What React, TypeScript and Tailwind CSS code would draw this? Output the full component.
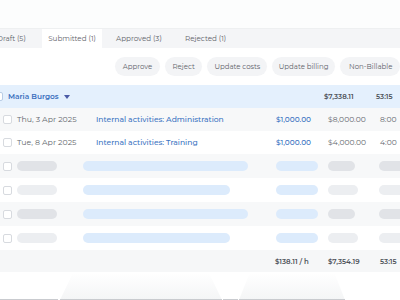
import React from "react";

const font = { fontFamily: "Montserrat, 'Noto Sans', Inter, sans-serif" };

function Box({ cls = "" }: { cls?: string }) {
  return <div className={`w-[9px] h-[9px] rounded-[2px] border border-[#d7dadf] bg-white shrink-0 ${cls}`} />;
}

function DataRow({ bg, date, desc, rate, cost, hours }: { bg: string; date: string; desc: string; rate: string; cost: string; hours: string }) {
  return (
    <div className={`flex items-center h-[23px] ${bg}`}>
      <div className="w-[17px] pl-[3px] shrink-0"><Box /></div>
      <div className="w-[79px] shrink-0 text-[#63676d] text-[7.8px]">{date}</div>
      <div className="w-[180px] shrink-0 text-[#3b74c2] font-medium whitespace-nowrap text-[7.6px]">{desc}</div>
      <div className="w-[52px] shrink-0 text-[#3b74c2] font-medium text-[7.4px]">{rate}</div>
      <div className="w-[52px] shrink-0 text-[#63676d] text-[7.6px]">{cost}</div>
      <div className="shrink-0 text-[#63676d] text-[7.6px]">{hours}</div>
    </div>
  );
}

function SkelRow({ bg, dark, blueW, grayW }: { bg: string; dark: boolean; blueW: string; grayW: string }) {
  const g = dark ? "bg-[#e1e3e7]" : "bg-[#eceef1]";
  return (
    <div className={`flex items-center h-[24px] ${bg}`}>
      <div className="w-[17px] pl-[3px] shrink-0"><Box /></div>
      <div className="w-[66px] shrink-0"><div className={`w-[40px] h-[10px] rounded-full ${g}`} /></div>
      <div className="w-[193px] shrink-0"><div className={`${blueW} h-[10px] rounded-full bg-[#dcebfc]`} /></div>
      <div className="w-[52px] shrink-0"><div className="w-[42px] h-[10px] rounded-full bg-[#dcebfc]" /></div>
      <div className="w-[51px] shrink-0"><div className={`${grayW} h-[10px] rounded-full ${g}`} /></div>
      <div className="shrink-0"><div className={`w-[30px] h-[10px] rounded-full ${g}`} /></div>
    </div>
  );
}

export default function App() {
  return (
    <div className="w-[400px] h-[300px] overflow-hidden bg-white relative text-[7px] leading-none" style={font}>
      <div className="h-[29px] bg-[#fcfdfd] border-b border-[#eef0f1]" />
      <div className="flex items-stretch h-[19px] bg-[#f4f5f7] text-[#5f636a] text-[7.2px]">
        <div className="flex items-center -ml-[3px] w-[45px]">Draft (5)</div>
        <div className="flex items-center justify-center w-[60px] bg-white">Submitted (1)</div>
        <div className="flex items-center pl-[14px] w-[83px]">Approved (3)</div>
        <div className="flex items-center">Rejected (1)</div>
      </div>
      <div className="flex items-center h-[37px] pl-[115px] gap-[5px] text-[#5f636a]">
        <div className="h-[19px] w-[48px] rounded-full bg-[#f3f4f6] flex items-center justify-center">Approve</div>
        <div className="h-[19px] w-[40px] rounded-full bg-[#f3f4f6] flex items-center justify-center">Reject</div>
        <div className="h-[19px] w-[64px] rounded-full bg-[#f3f4f6] flex items-center justify-center">Update costs</div>
        <div className="h-[19px] w-[67px] rounded-full bg-[#f3f4f6] flex items-center justify-center">Update billing</div>
        <div className="h-[19px] w-[60px] rounded-full bg-[#f3f4f6] flex items-center pl-[9px] shrink-0 whitespace-nowrap">Non-Billable</div>
      </div>
      <div className="flex items-center h-[23px] bg-[#e4f0fd]">
        <div className="w-[8px] -ml-[6px] mr-[6px] shrink-0"><div className="w-[9px] h-[9px] rounded-[2px] border border-[#b9cde6] bg-white" /></div>
        <div className="w-[316px] shrink-0 flex items-center gap-[5px] text-[#3b6fbd] font-semibold text-[7.4px]">
          Maria Burgos
          <svg width="6" height="4" viewBox="0 0 6 4"><path d="M0 0h6L3 4z" fill="#4a5aa6" /></svg>
        </div>
        <div className="w-[52px] shrink-0 text-[#4e535a] font-semibold">$7,338.11</div>
        <div className="shrink-0 text-[#4e535a] font-semibold">53:15</div>
      </div>
      <DataRow bg="bg-[#f7f8f9]" date="Thu, 3 Apr 2025" desc="Internal activities: Administration" rate="$1,000.00" cost="$8,000.00" hours="8:00" />
      <DataRow bg="bg-white" date="Tue, 8 Apr 2025" desc="Internal activities: Training" rate="$1,000.00" cost="$4,000.00" hours="4:00" />
      <SkelRow bg="bg-[#f7f8f9]" dark blueW="w-[165px]" grayW="w-[27px]" />
      <SkelRow bg="bg-white" dark={false} blueW="w-[147px]" grayW="w-[30px]" />
      <SkelRow bg="bg-[#f7f8f9]" dark blueW="w-[165px]" grayW="w-[27px]" />
      <SkelRow bg="bg-white" dark={false} blueW="w-[147px]" grayW="w-[30px]" />
      <div className="flex items-center h-[22px] bg-[#f6f7f8] text-[#4e535a] font-semibold">
        <div className="w-[275px] shrink-0" />
        <div className="w-[53px] shrink-0">$138.11 / h</div>
        <div className="w-[52px] shrink-0">$7,354.19</div>
        <div className="shrink-0">53:15</div>
      </div>
      <div className="absolute left-[60px] bottom-0 w-[162px] h-[27px] bg-gradient-to-b from-white to-[#f4f5f6] [clip-path:polygon(8%_0,92%_0,100%_100%,0_100%)]" />
      <div className="absolute left-[239px] bottom-0 w-[106px] h-[27px] bg-gradient-to-b from-white to-[#f4f5f6] [clip-path:polygon(10%_0,90%_0,100%_100%,0_100%)]" />
      <div className="absolute left-0 right-0 bottom-0 h-[1px] flex">
        <div className="w-[58px] bg-[#c9cbcf]" />
        <div className="w-[2px]" />
        <div className="w-[162px] bg-[#c9cbcf]" />
        <div className="w-[1px]" />
        <div className="w-[15px] bg-[#c9cbcf]" />
        <div className="w-[1px]" />
        <div className="w-[106px] bg-[#c9cbcf]" />
      </div>
    </div>
  );
}
